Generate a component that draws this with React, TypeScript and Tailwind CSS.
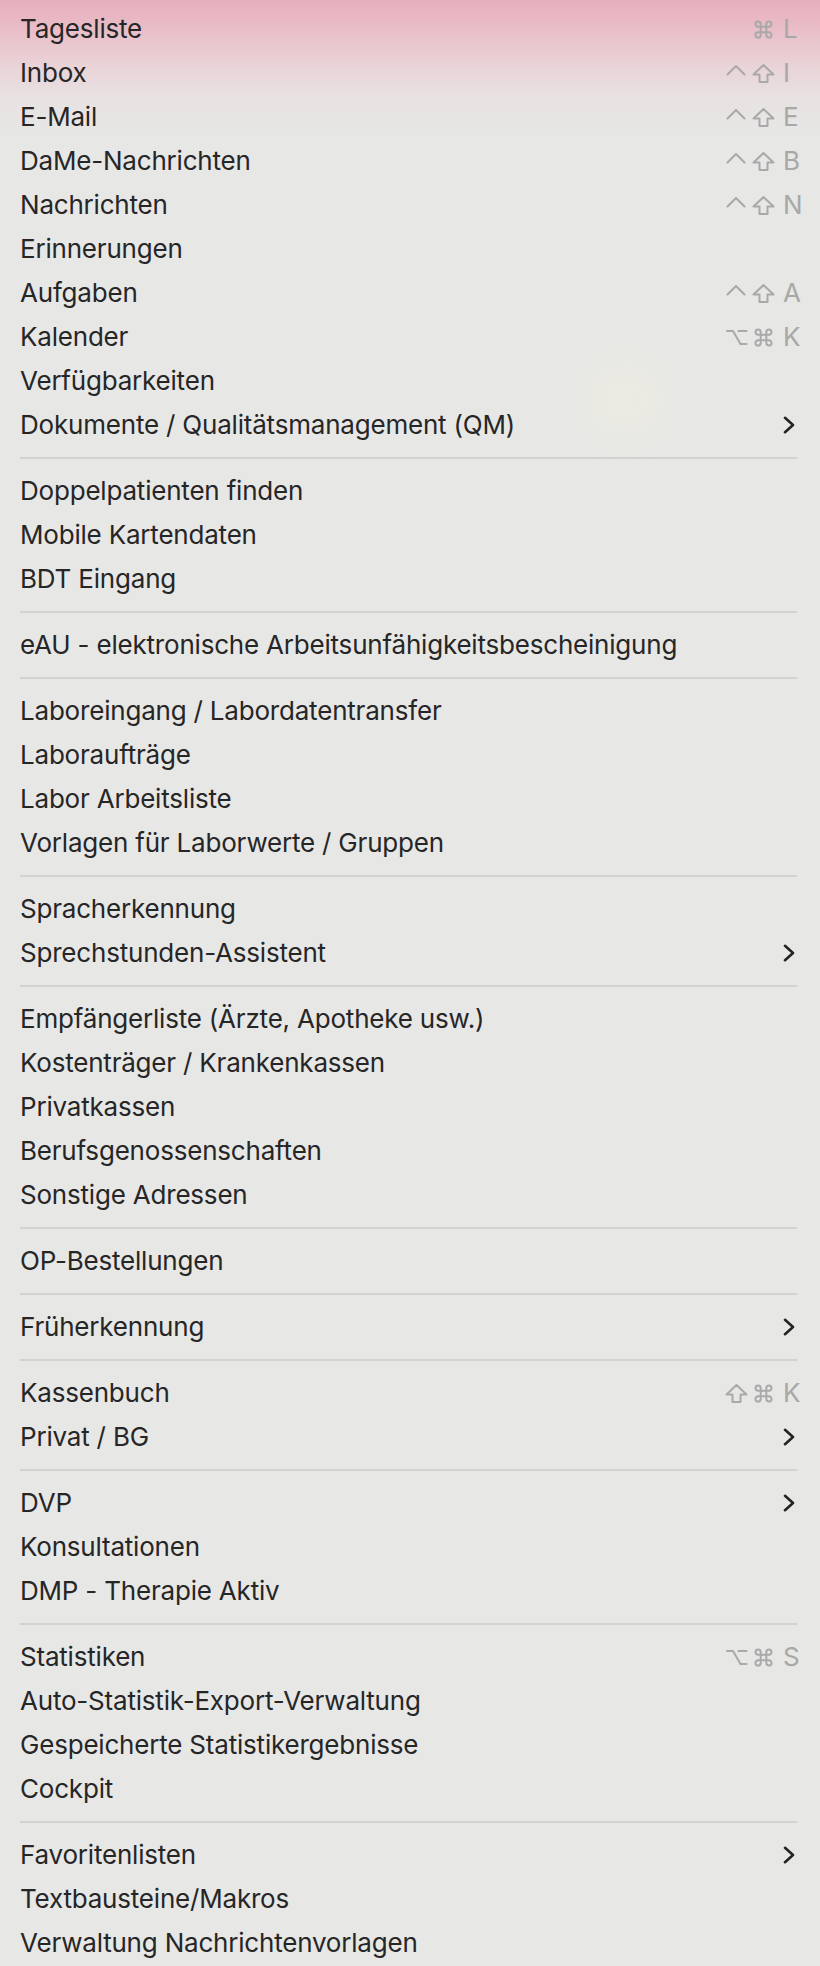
type Mod = 'ctrl' | 'shift' | 'cmd' | 'opt';

type Item = {
  label: string;
  mods?: Mod[];
  keyChar?: string;
  submenu?: boolean;
};

const groups: Item[][] = [
  [
    { label: 'Tagesliste', mods: ['cmd'], keyChar: 'L' },
    { label: 'Inbox', mods: ['ctrl', 'shift'], keyChar: 'I' },
    { label: 'E-Mail', mods: ['ctrl', 'shift'], keyChar: 'E' },
    { label: 'DaMe-Nachrichten', mods: ['ctrl', 'shift'], keyChar: 'B' },
    { label: 'Nachrichten', mods: ['ctrl', 'shift'], keyChar: 'N' },
    { label: 'Erinnerungen' },
    { label: 'Aufgaben', mods: ['ctrl', 'shift'], keyChar: 'A' },
    { label: 'Kalender', mods: ['opt', 'cmd'], keyChar: 'K' },
    { label: 'Verfügbarkeiten' },
    { label: 'Dokumente / Qualitätsmanagement (QM)', submenu: true },
  ],
  [
    { label: 'Doppelpatienten finden' },
    { label: 'Mobile Kartendaten' },
    { label: 'BDT Eingang' },
  ],
  [{ label: 'eAU - elektronische Arbeitsunfähigkeitsbescheinigung' }],
  [
    { label: 'Laboreingang / Labordatentransfer' },
    { label: 'Laboraufträge' },
    { label: 'Labor Arbeitsliste' },
    { label: 'Vorlagen für Laborwerte / Gruppen' },
  ],
  [
    { label: 'Spracherkennung' },
    { label: 'Sprechstunden-Assistent', submenu: true },
  ],
  [
    { label: 'Empfängerliste (Ärzte, Apotheke usw.)' },
    { label: 'Kostenträger / Krankenkassen' },
    { label: 'Privatkassen' },
    { label: 'Berufsgenossenschaften' },
    { label: 'Sonstige Adressen' },
  ],
  [{ label: 'OP-Bestellungen' }],
  [{ label: 'Früherkennung', submenu: true }],
  [
    { label: 'Kassenbuch', mods: ['shift', 'cmd'], keyChar: 'K' },
    { label: 'Privat / BG', submenu: true },
  ],
  [
    { label: 'DVP', submenu: true },
    { label: 'Konsultationen' },
    { label: 'DMP - Therapie Aktiv' },
  ],
  [
    { label: 'Statistiken', mods: ['opt', 'cmd'], keyChar: 'S' },
    { label: 'Auto-Statistik-Export-Verwaltung' },
    { label: 'Gespeicherte Statistikergebnisse' },
    { label: 'Cockpit' },
  ],
  [
    { label: 'Favoritenlisten', submenu: true },
    { label: 'Textbausteine/Makros' },
    { label: 'Verwaltung Nachrichtenvorlagen' },
  ],
];

// macOS key symbols, drawn since the fonts here lack them
function ModIcon({ mod }: { mod: Mod }) {
  return (
    <svg
      width="21"
      height="19"
      viewBox="0 0 21 19"
      fill="none"
      stroke="#a9a9a9"
      strokeWidth="2"
      strokeLinecap="round"
      strokeLinejoin="round"
      className="overflow-visible"
    >
      {mod === 'ctrl' && <polyline points="1.5,10.5 10,2 18.5,10.5" />}
      {mod === 'shift' && (
        <path d="M10.5 1 L20.5 10.5 L14.5 10.5 L14.5 18 L6.5 18 L6.5 10.5 L0.5 10.5 Z" />
      )}
      {mod === 'cmd' && (
        <path d="M7.7 6.7 V4.1 A2.6 2.6 0 1 0 5.1 6.7 H15.9 A2.6 2.6 0 1 0 13.3 4.1 V14.9 A2.6 2.6 0 1 0 15.9 12.3 H5.1 A2.6 2.6 0 1 0 7.7 14.9 Z" />
      )}
      {mod === 'opt' && <path d="M1 3 H7 L14.5 16 H20.5 M12.5 3 H20.5" />}
    </svg>
  );
}

function Chevron() {
  return (
    <svg
      width="12"
      height="18"
      viewBox="0 0 12 18"
      fill="none"
      stroke="#232323"
      strokeWidth="2.6"
      strokeLinecap="round"
      strokeLinejoin="round"
      className="mr-[2px]"
    >
      <polyline points="2,1.8 10,9 2,16.2" />
    </svg>
  );
}

function MenuRow({ item }: { item: Item }) {
  return (
    <div className="h-[44px] flex items-center justify-between pl-[20px] pr-[23px]">
      <span className="text-[26px] leading-none text-[#262626] tracking-[-0.2px] whitespace-nowrap">
        {item.label}
      </span>
      {item.keyChar && (
        <div className="flex items-center">
          <div className="flex items-center gap-[6px]">
            {item.mods?.map((m) => (
              <ModIcon key={m} mod={m} />
            ))}
          </div>
          <span className="w-[14px] ml-[9px] text-[26px] leading-none text-[#a8a8a8] whitespace-nowrap">
            {item.keyChar}
          </span>
        </div>
      )}
      {item.submenu && <Chevron />}
    </div>
  );
}

export default function App() {
  return (
    <div className="min-h-screen w-full pt-[7px] font-['Inter','Liberation_Sans',sans-serif] bg-[radial-gradient(circle_at_625px_400px,rgba(236,235,225,0.9)_0px,rgba(234,233,226,0.5)_45px,transparent_72px),linear-gradient(to_bottom,#e8aebc_0px,#e9bec8_30px,#e9d3d7_65px,#e8e2e2_100px,#e7e7e6_135px,#e7e7e6_100%)]">
      {groups.map((group, gi) => (
        <div key={gi}>
          {gi > 0 && (
            <div className="h-[22px] flex items-center pl-[20px] pr-[23px]">
              <div className="h-[2px] w-full bg-[#d2d2d2]" />
            </div>
          )}
          {group.map((item) => (
            <MenuRow key={item.label} item={item} />
          ))}
        </div>
      ))}
    </div>
  );
}
